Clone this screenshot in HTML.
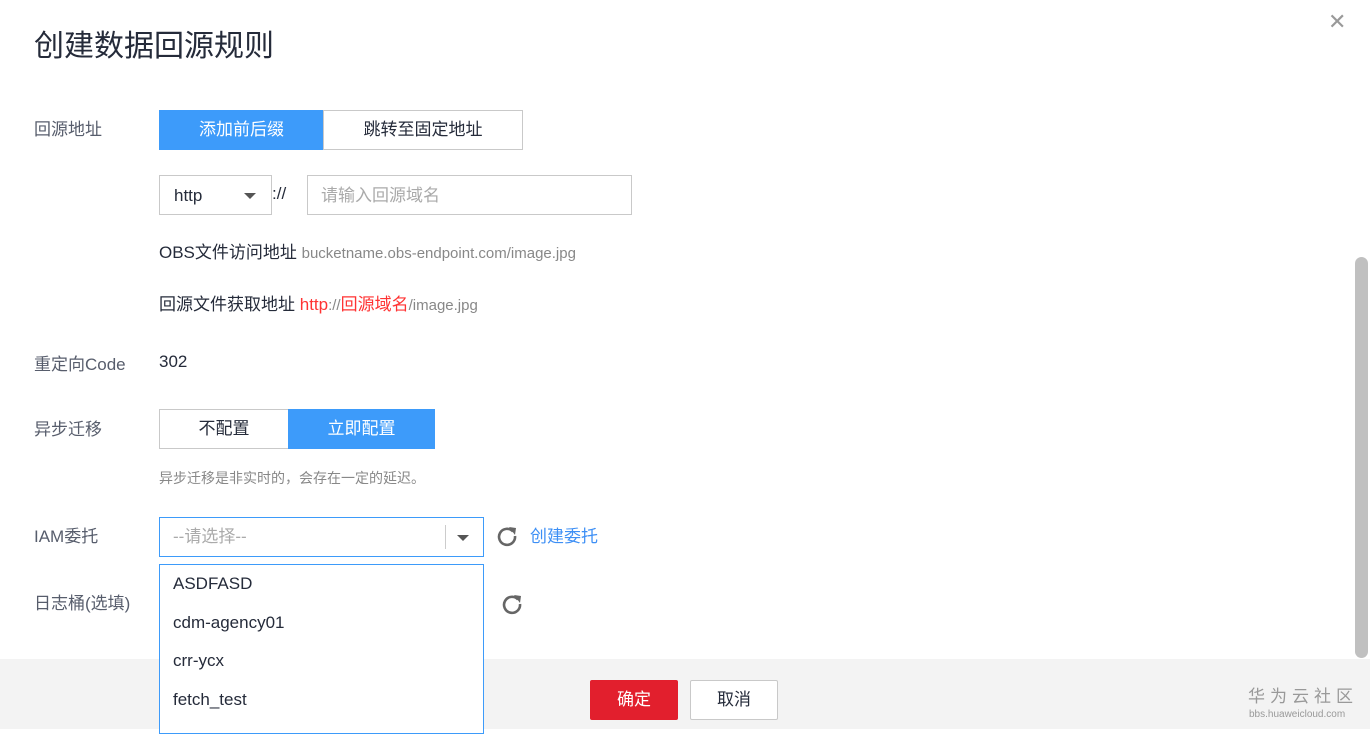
<!DOCTYPE html>
<html><head><meta charset="utf-8"><style>
body{margin:0;width:1370px;height:729px;overflow:hidden;background:#fff;position:relative;font-family:"Liberation Sans","Noto Sans CJK SC",sans-serif;color:#252b3a;font-size:17px;line-height:20px}
.a{position:absolute;white-space:nowrap}
.lbl{color:#575d6c;font-size:17px}
.box{position:absolute;box-sizing:border-box;border:1px solid #c9c9c9;background:#fff}
.btn{position:absolute;box-sizing:border-box;display:flex;align-items:center;justify-content:center;font-size:17px}
</style></head><body>
<div class="a" style="left:34px;top:30px;font-size:30px;line-height:34px;color:#252b3a">创建数据回源规则</div>
<div class="a" style="left:1328px;top:12px;font-size:22px;color:#999">✕</div>

<div class="a lbl" style="left:34px;top:120px">回源地址</div>
<div class="btn" style="left:159px;top:110px;width:165px;height:40px;background:#3d9bfa;color:#fff">添加前后缀</div>
<div class="btn" style="left:323px;top:110px;width:200px;height:40px;border:1px solid #c9c9c9;color:#252b3a">跳转至固定地址</div>

<div class="box" style="left:159px;top:175px;width:113px;height:40px"></div>
<div class="a" style="left:174px;top:186px">http</div>
<div class="a" style="left:244px;top:193px;width:0;height:0;border-left:6px solid transparent;border-right:6px solid transparent;border-top:6px solid #555"></div>
<div class="a" style="left:272px;top:184px">://</div>
<div class="box" style="left:307px;top:175px;width:325px;height:40px"></div>
<div class="a" style="left:321px;top:186px;color:#aaa">请输入回源域名</div>

<div class="a" style="left:159px;top:243px">OBS文件访问地址 <span style="font-size:15px;color:#888">bucketname.obs-endpoint.com/image.jpg</span></div>
<div class="a" style="left:159px;top:295px">回源文件获取地址 <span style="color:#f33">http</span><span style="font-size:15px;color:#888">://</span><span style="color:#f33">回源域名</span><span style="font-size:15px;color:#888">/image.jpg</span></div>

<div class="a lbl" style="left:34px;top:355px">重定向Code</div>
<div class="a" style="left:159px;top:352px">302</div>

<div class="a lbl" style="left:34px;top:420px">异步迁移</div>
<div class="btn" style="left:159px;top:409px;width:130px;height:40px;border:1px solid #c9c9c9">不配置</div>
<div class="btn" style="left:288px;top:409px;width:147px;height:40px;background:#3d9bfa;color:#fff">立即配置</div>
<div class="a" style="left:159px;top:468px;font-size:14px;color:#888">异步迁移是非实时的，会存在一定的延迟。</div>

<div class="a lbl" style="left:34px;top:527px">IAM委托</div>
<div class="box" style="left:159px;top:517px;width:325px;height:40px;border-color:#3d9bfa"></div>
<div class="a" style="left:173px;top:527px;color:#aaa">--请选择--</div>
<div class="a" style="left:445px;top:525px;width:1px;height:24px;background:#ccc"></div>
<div class="a" style="left:457px;top:535px;width:0;height:0;border-left:6px solid transparent;border-right:6px solid transparent;border-top:6px solid #555"></div>
<svg class="a" style="left:496px;top:525px" width="22" height="22" viewBox="0 0 22 22"><path d="M17 6.5A8 8 0 1 0 19 11" fill="none" stroke="#666" stroke-width="2.6"/><path d="M13 2l7 1-1 7z" fill="#666"/></svg>
<div class="a" style="left:530px;top:527px;color:#3d8ff5">创建委托</div>

<div class="a lbl" style="left:34px;top:594px">日志桶(选填)</div>
<svg class="a" style="left:501px;top:593px" width="22" height="22" viewBox="0 0 22 22"><path d="M17 6.5A8 8 0 1 0 19 11" fill="none" stroke="#666" stroke-width="2.6"/><path d="M13 2l7 1-1 7z" fill="#666"/></svg>

<div class="a" style="left:0;top:659px;width:1370px;height:70px;background:#f3f3f3"></div>
<div class="a" style="left:1355px;top:257px;width:13px;height:401px;border-radius:7px;background:#c0c0c0"></div>
<div class="btn" style="left:590px;top:680px;width:88px;height:40px;background:#e21f2d;color:#fff;border-radius:2px">确定</div>
<div class="btn" style="left:690px;top:680px;width:88px;height:40px;background:#fff;border:1px solid #c9c9c9;border-radius:2px">取消</div>
<div class="a" style="left:1248px;top:688px;font-size:17px;line-height:18px;color:#999;letter-spacing:5px">华为云社区</div>
<div class="a" style="left:1249px;top:709px;font-size:10px;line-height:12px;color:#999">bbs.huaweicloud.com</div>

<div class="box" style="left:159px;top:564px;width:325px;height:170px;border-color:#3d9bfa"></div>
<div class="a" style="left:173px;top:574px">ASDFASD</div>
<div class="a" style="left:173px;top:613px">cdm-agency01</div>
<div class="a" style="left:173px;top:651px">crr-ycx</div>
<div class="a" style="left:173px;top:690px">fetch_test</div>
</body></html>
